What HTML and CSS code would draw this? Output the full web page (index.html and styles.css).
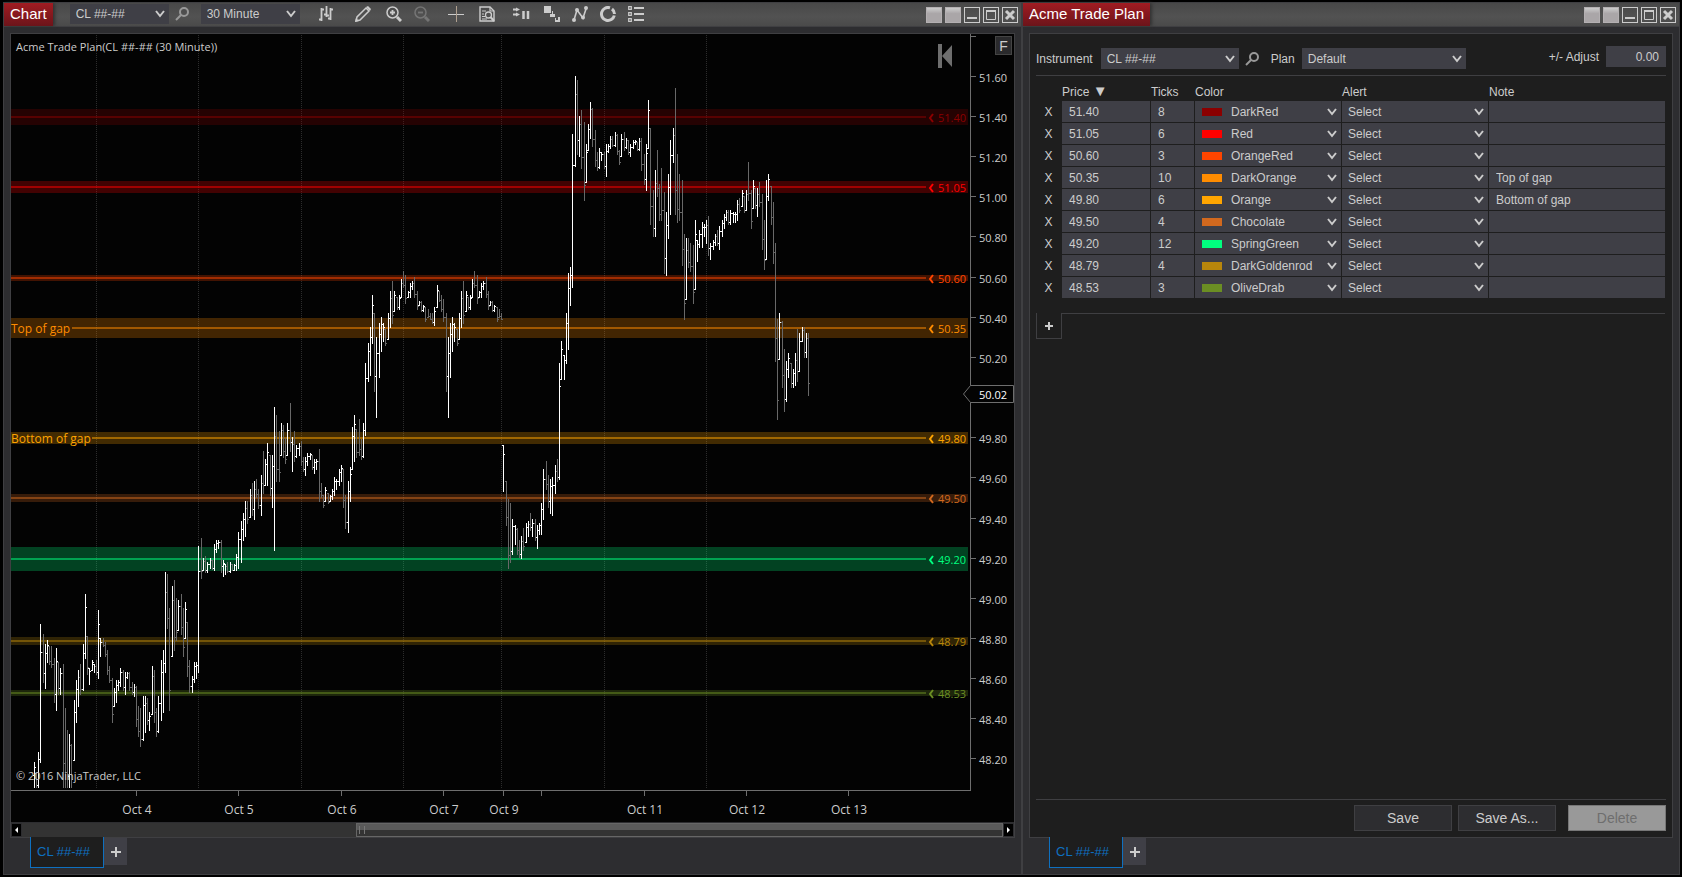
FILE: index.html
```html
<!DOCTYPE html>
<html lang="en">
<head>
    <meta charset="utf-8">
    <title>Acme Trade Plan</title>
    <link rel="stylesheet" href="styles.css">
</head>
<body>

    <!-- Chart window -->
    <section class="window chart-window">
        <header class="titlebar">
            <h1 class="title">Chart</h1>
            <select class="combo tool-combo" aria-label="Chart instrument"><option>CL ##-##</option></select>
            <button class="search" aria-label="Find instrument">
                <svg width="14" height="14" viewBox="0 0 14 14"><circle cx="9" cy="5" r="4"/><path d="M6 8L1 13"/></svg>
            </button>
            <select class="combo tool-combo" aria-label="Interval"><option>30 Minute</option></select>
            <div class="tools">
                <button class="tool first" aria-label="Chart style">
                    <svg width="16" height="16" viewBox="0 0 16 16"><path d="M3.500 2V15M1 13.500H3M4 3.500H6M8.500 0V11M6 8.500H8M9 9.500H11M12.500 2V14M10 12.500H12M13 3.500H15" stroke-width="1.800"/></svg>
                </button>
                <button class="tool wide" aria-label="Draw">
                    <svg width="16" height="16" viewBox="0 0 16 16"><path d="M1 15L2 11L11 2L14 5L5 14Z" stroke-width="1.500"/><path d="M11 1L13 0L16 3L15 5Z" class="solid"/><path d="M0 16L1 12L4 15Z" class="solid"/></svg>
                </button>
                <button class="tool near" aria-label="Zoom in">
                    <svg width="16" height="16" viewBox="0 0 16 16"><circle cx="6.500" cy="6.500" r="5.500" stroke-width="1.500"/><path d="M6.500 4V9M4 6.500H9" stroke-width="1.800"/><path d="M11 11L15 15" stroke-width="3"/></svg>
                </button>
                <button class="tool" aria-label="Zoom out" disabled>
                    <svg width="16" height="16" viewBox="0 0 16 16"><circle cx="6.500" cy="6.500" r="5.500" stroke-width="1.500"/><path d="M4 6.500H9" stroke-width="1.800"/><path d="M11 11L15 15" stroke-width="3"/></svg>
                </button>
                <button class="tool wide" aria-label="Crosshair">
                    <svg width="16" height="16" viewBox="0 0 16 16"><path d="M0 8.500H16" stroke-width="1"/><path d="M8.500 0V16" stroke="#b0a090" stroke-width="1"/></svg>
                </button>
                <button class="tool near" aria-label="Data box">
                    <svg width="16" height="16" viewBox="0 0 16 16"><path d="M1 1H11L15 5V15H1Z" stroke-width="1.400"/><path d="M11 1V5H15M3 5H7M3 8H5M3 10.500H6M3 13H8" stroke-width="1.200"/><circle cx="9.500" cy="9" r="3" stroke-width="1.300"/><path d="M11.500 11L15 15" stroke-width="2"/></svg>
                </button>
                <button class="tool wide" aria-label="Chart trader">
                    <svg width="18" height="16" viewBox="0 0 18 16"><path d="M1 3.500H5M1 8.500H5" stroke-width="2"/><path d="M4 1.500L8 3.500L4 5.500ZM4 6.500L8 8.500L4 10.500Z" class="solid"/><path d="M11.500 5V13M16 5V13" stroke-width="2.500"/></svg>
                </button>
                <button class="tool near" aria-label="Data series">
                    <svg width="16" height="16" viewBox="0 0 16 16"><path d="M0 0H7V7H0Z M6 11H11V5H9V8H6ZM11 12V16H16V11H14V14H12V12Z M8 5H11V8H8Z" class="solid"/></svg>
                </button>
                <button class="tool" aria-label="Indicators">
                    <svg width="16" height="16" viewBox="0 0 16 16"><path d="M2 14L5 4L11 12L14 3" stroke-width="1.600"/><circle cx="2" cy="14" r="2" class="solid"/><circle cx="5" cy="4" r="2" class="solid"/><circle cx="11" cy="11.500" r="2" class="solid"/><circle cx="14" cy="2" r="2" class="solid"/></svg>
                </button>
                <button class="tool" aria-label="Strategies">
                    <svg width="16" height="16" viewBox="0 0 16 16"><path d="M10 1.800A6.500 6.500 0 1 0 14.300 9.500M12 3A6.500 6.500 0 0 1 14.500 8" stroke-width="3"/></svg>
                </button>
                <button class="tool" aria-label="Properties">
                    <svg width="16" height="16" viewBox="0 0 16 16"><path d="M.7 .7H3.300V3.300H.7ZM.7 6.700H3.300V9.300H.7ZM.7 12.700H3.300V15.300H.7Z" stroke-width="1.200"/><path d="M6 2H16M6 8H16M6 14H16" stroke-width="2"/></svg>
                </button>
            </div>
            <div class="controls">
                <button class="control link" aria-label="Instrument link"></button>
                <button class="control link" aria-label="Interval link"></button>
                <button class="control" aria-label="Minimize"><svg width="14" height="14" viewBox="0 0 14 14"><path d="M2 10H12"/></svg></button>
                <button class="control" aria-label="Maximize"><svg width="14" height="14" viewBox="0 0 14 14"><path d="M2.500 3V11.500H11.500V3" class="thin"/><path d="M2 3H12"/></svg></button>
                <button class="control" aria-label="Close"><svg width="14" height="14" viewBox="0 0 14 14"><path d="M3 3L11 11M11 3L3 11" class="thick"/></svg></button>
            </div>
        </header>

        <div class="frame chart-frame">
            <svg class="chart" id="chart" viewBox="11 34 1003 788" preserveAspectRatio="xMinYMin meet"></svg>
            <button class="fixed-scale">F</button>
            <div class="scrollbar">
                <button class="arrow" aria-label="Scroll left"><svg width="9" height="12" viewBox="0 0 9 12"><path d="M6 3V9L3 6Z"/></svg></button>
                <div class="track"><div class="thumb"></div></div>
                <button class="arrow" aria-label="Scroll right"><svg width="9" height="12" viewBox="0 0 9 12"><path d="M3 3V9L6 6Z"/></svg></button>
            </div>
        </div>

        <nav class="tabs">
            <a class="tab" href="#chart">CL ##-##</a>
            <button class="add-tab" aria-label="Add tab"><svg width="10" height="10" viewBox="0 0 10 10"><path d="M5 0V10M0 5H10"/></svg></button>
        </nav>
    </section>

    <!-- Trade plan window -->
    <section class="window plan-window">
        <header class="titlebar">
            <h1 class="title">Acme Trade Plan</h1>
            <div class="controls">
                <button class="control link" aria-label="Instrument link"></button>
                <button class="control link" aria-label="Interval link"></button>
                <button class="control" aria-label="Minimize"><svg width="14" height="14" viewBox="0 0 14 14"><path d="M2 10H12"/></svg></button>
                <button class="control" aria-label="Maximize"><svg width="14" height="14" viewBox="0 0 14 14"><path d="M2.500 3V11.500H11.500V3" class="thin"/><path d="M2 3H12"/></svg></button>
                <button class="control" aria-label="Close"><svg width="14" height="14" viewBox="0 0 14 14"><path d="M3 3L11 11M11 3L3 11" class="thick"/></svg></button>
            </div>
        </header>

        <div class="frame plan" id="plan">
            <div class="plan-bar">
                <label for="instrument">Instrument</label>
                <select class="combo instrument" id="instrument"><option>CL ##-##</option></select>
                <button class="search" aria-label="Find instrument">
                    <svg width="14" height="14" viewBox="0 0 14 14"><circle cx="9" cy="5" r="4"/><path d="M6 8L1 13"/></svg>
                </button>
                <label for="planName">Plan</label>
                <select class="combo plan-name" id="planName"><option>Default</option></select>
                <div class="adjust">
                    <label for="adjust">+/- Adjust</label>
                    <input type="text" id="adjust" value="0.00">
                </div>
            </div>

            <table class="levels">
                <colgroup>
                    <col class="col-x"><col class="col-price"><col class="col-ticks">
                    <col class="col-combo"><col class="col-combo"><col>
                </colgroup>
                <thead>
                    <tr><th></th><th>Price <span class="sort">▼</span></th><th>Ticks</th><th>Color</th><th>Alert</th><th>Note</th></tr>
                </thead>
                <tbody id="levelRows"></tbody>
            </table>

            <div class="add-row">
                <button class="add-level" aria-label="Add level"><svg width="8" height="8" viewBox="0 0 8 8"><path d="M4 0V8M0 4H8"/></svg></button>
                <span class="rule"></span>
            </div>

            <footer class="actions">
                <button class="action">Save</button>
                <button class="action">Save As...</button>
                <button class="action delete" disabled>Delete</button>
            </footer>
        </div>

        <nav class="tabs">
            <a class="tab" href="#plan">CL ##-##</a>
            <button class="add-tab" aria-label="Add tab"><svg width="10" height="10" viewBox="0 0 10 10"><path d="M5 0V10M0 5H10"/></svg></button>
        </nav>
    </section>

    <script src="script.js"></script>
</body>
</html>
```

FILE: styles.css
```css
* { box-sizing: border-box; }
body {
    margin: 0;
    padding: 2px 2px 2px 3px;
    height: 100vh;
    display: flex;
    background: #000;
    color: #ccc;
    font: 12px/20px "Liberation Sans", Arial, sans-serif;
}
button, input, select {
    margin: 0;
    padding: 0;
    border: 0;
    border-radius: 0;
    background: none;
    color: inherit;
    font: inherit;
}
svg { display: block; }

/* windows */
.window {
    display: flex;
    flex-direction: column;
    border: 1px solid #3f3f42;
    background: #2d2d30;
    height: calc(100vh - 4px);
}
.chart-window { flex: 1; min-width: 0; }
.plan-window { flex: none; width: 658px; }
.titlebar {
    display: flex;
    align-items: flex-start;
    flex: none;
    height: 24px;
    padding-right: 3px;
    background: linear-gradient(#484848, #525252 60%, #4a4a4a);
    border-bottom: 1px solid #3f3f42;
}
.title {
    margin: 0;
    height: 23px;
    padding: 0 6px;
    background: linear-gradient(#a01c22, #6c141a);
    box-shadow: 2px 0 3px #333;
    color: #fff;
    font-size: 15px;
    font-weight: normal;
    line-height: 22px;
    white-space: nowrap;
}
.frame {
    display: flex;
    flex-direction: column;
    flex: 1;
    min-height: 0;
    margin: 6px 6px 0;
    border: 1px solid #3f3f42;
}

/* combos */
.combo {
    appearance: none;
    height: 21px;
    padding: 0 6px;
    background: #3f3f46 url("data:image/svg+xml,%3Csvg xmlns='http://www.w3.org/2000/svg' width='10' height='8'%3E%3Cpath d='M1 1L5 6L9 1' fill='none' stroke='%23ccc' stroke-width='2'/%3E%3C/svg%3E") no-repeat right 4px center;
}
.tool-combo { width: 99px; height: 20px; background-position-x: right 6px; }
.titlebar .combo, .titlebar .search, .tools { margin-top: 1px; }
.titlebar .title + .combo { margin-left: 17px; }
.search { width: 32px; padding-left: 6px; height: 20px; }
.search svg { fill: none; stroke: #999; stroke-width: 2; }

/* chart toolbar */
.tools { display: flex; margin-left: 9px; }
.tool { display: flex; align-items: center; justify-content: center; width: 28px; height: 20px; }
.tool svg { fill: none; stroke: #ccc; }
.tool .solid { fill: #ccc; stroke: none; }
.tool:disabled { opacity: .3; }
.first { width: 34px; }
.near { margin-left: 3px; }
.wide { margin-left: 6px; }

.controls { display: flex; gap: 3px; margin: 4px 0 0 auto; }
.control { width: 16px; height: 16px; border: 1px solid #ccc; }
.control svg { fill: none; stroke: #ccc; stroke-width: 2; }
.control .thin { stroke-width: 1; }
.control .thick { stroke-width: 3; }
.link { background: linear-gradient(#ccc, #aaa6a8 40%, #aaa6a8); border-color: #b4b0b2; }

/* chart */
.chart-frame { position: relative; background: #030303; }
.chart { flex: 1; min-height: 0; width: 100%; shape-rendering: crispEdges; }
.chart text { font: 11px "Open Sans", "Noto Sans", sans-serif; fill: #ccc; }
.chart .grid { stroke: #2c2c2c; stroke-dasharray: 1 1; }
.chart .axis { stroke: #6e6e6e; fill: none; }
.chart .up { stroke: #fff; fill: none; }
.chart .down { stroke: #686868; fill: none; }
.chart .chevron { fill: none; stroke-width: 2; shape-rendering: auto; }
.chart .marker { fill: #030303; stroke: #6e6e6e; shape-rendering: auto; }
.chart .marker-text { fill: #fff; }
.chart .rewind { fill: #6e6e6e; shape-rendering: auto; }
.chart .note { font-size: 12px; }
.chart .date { font-size: 12px; text-anchor: middle; }
.fixed-scale {
    position: absolute;
    top: 2px;
    right: 2px;
    width: 17px;
    height: 19px;
    border: 1px solid #444;
    background: #2a2a2c;
    font-size: 14px;
    line-height: 16px;
}

.scrollbar {
    display: flex;
    align-items: center;
    flex: none;
    height: 15px;
    padding: 0 1px;
    gap: 1px;
    background: #2d2d30;
}
.arrow { width: 9px; height: 12px; background: #000; }
.arrow svg { fill: #fff; }
.track { flex: 1; height: 14px; background: #333; }
.thumb {
    width: 66%;
    height: 14px;
    margin-left: auto;
    border: 1px solid #666;
    background: linear-gradient(#5a5a5a 50%, #333 50%);
}
.thumb::before {
    content: "";
    display: block;
    width: 4px;
    height: 8px;
    margin: 2px;
    border: solid #777;
    border-width: 0 1px;
}

/* tabs under each window */
.tabs { display: flex; align-items: flex-start; flex: none; height: 36px; padding-left: 26px; }
.tab {
    width: 74px;
    height: 31px;
    margin-top: -1px;
    padding-left: 6px;
    border: 1px solid #0e70c0;
    border-top: 0;
    background: #1e1e1e;
    color: #0e70c0;
    font-size: 13px;
    line-height: 29px;
    text-decoration: none;
    position: relative;
}
.add-tab { display: flex; align-items: center; justify-content: center; width: 23px; height: 27px; background: #3f3f46; }
.add-tab svg, .add-level svg { stroke: #ccc; stroke-width: 2; }

/* trade plan */
.plan { padding: 0 6px 6px; background: #1e1e1e; }
.plan-bar {
    display: flex;
    align-items: flex-end;
    flex: none;
    height: 42px;
    padding: 12px 0 6px;
    border-bottom: 1px solid #3f3f42;
}
.instrument { width: 138px; margin-left: 8px; background-position-x: right 6px; }
.plan-name { width: 164px; margin-left: 7px; }
.adjust { display: flex; align-items: center; align-self: flex-start; gap: 7px; margin-left: auto; }
.adjust input { width: 60px; height: 21px; padding-right: 7px; background: #3f3f46; text-align: right; }

.levels { width: 100%; table-layout: fixed; border-spacing: 0; }
.levels th { height: 25px; padding: 0; font-weight: normal; text-align: left; line-height: 18px; vertical-align: bottom; }
.levels td { height: 22px; padding: 0 1px 1px 0; }
.levels input, .levels select { display: block; width: 100%; height: 21px; background-color: #3f3f46; }
.levels input { padding: 0 7px; }
.sort { font-size: 15px; line-height: 16px; }
.col-x { width: 26px; }
.col-price { width: 89px; }
.col-ticks { width: 44px; }
.col-combo { width: 147px; }
.remove { display: block; width: 25px; height: 21px; }
.color-cell { display: flex; align-items: center; background: #3f3f46; padding-left: 7px; }
.swatch { flex: none; width: 20px; height: 8px; }
.color-cell .combo { padding: 0 0 0 9px; }

.add-row { display: flex; flex: none; margin-top: 14px; }
.add-level {
    display: flex;
    align-items: center;
    justify-content: center;
    width: 26px;
    height: 26px;
    border: 1px solid #3f3f42;
    border-top: 0;
}
.rule { flex: 1; border-top: 1px solid #3f3f42; margin-right: 1px; }

.actions {
    display: flex;
    justify-content: flex-end;
    gap: 6px;
    margin-top: auto;
    padding-top: 5px;
    border-top: 1px solid #3f3f42;
}
.action { width: 98px; height: 26px; border: 1px solid #3f3f42; background: #2d2d30; font-size: 14px; }
.delete { margin-left: 6px; border-color: #777; background: #999; color: #6e6e6e; }
```

FILE: script.js
```js
// price levels of the plan, shown in the table and on the chart
const levels = [
    { price: '51.40', ticks: 8, color: 'DarkRed', note: '' },
    { price: '51.05', ticks: 6, color: 'Red', note: '' },
    { price: '50.60', ticks: 3, color: 'OrangeRed', note: '' },
    { price: '50.35', ticks: 10, color: 'DarkOrange', note: 'Top of gap', start: 72 },
    { price: '49.80', ticks: 6, color: 'Orange', note: 'Bottom of gap', start: 92 },
    { price: '49.50', ticks: 4, color: 'Chocolate', note: '' },
    { price: '49.20', ticks: 12, color: 'SpringGreen', note: '' },
    { price: '48.79', ticks: 4, color: 'DarkGoldenrod', note: '' },
    { price: '48.53', ticks: 3, color: 'OliveDrab', note: '' }
];

document.getElementById('levelRows').innerHTML = levels.map(l => `
    <tr>
        <td><button class="remove" aria-label="Remove ${l.price}">X</button></td>
        <td><input type="text" aria-label="Price" value="${l.price}"></td>
        <td><input type="text" aria-label="Ticks" value="${l.ticks}"></td>
        <td><div class="color-cell"><span class="swatch" style="background: ${l.color}"></span><select class="combo" aria-label="Color"><option>${l.color}</option></select></div></td>
        <td><select class="combo" aria-label="Alert"><option>Select</option></select></td>
        <td><input type="text" aria-label="Note" value="${l.note}"></td>
    </tr>`).join('');

// bars: x, high, low, 1 = up / 0 = down
const bars = [
    [34,762,788,1],[36,773,788,0],[38,752,788,1],[40,624,763,1],[43,634,683,0],[45,644,689,1],[47,640,663,1],[49,646,665,0],
    [51,646,668,0],[54,658,703,0],[56,648,711,1],[58,662,695,0],[60,668,695,1],[63,664,788,0],[65,708,788,0],[67,730,788,0],
    [69,734,788,1],[71,744,788,0],[74,700,761,1],[76,680,723,1],[78,670,707,1],[80,664,695,0],[83,644,691,1],[85,594,659,1],
    [87,636,675,0],[89,668,685,1],[92,660,671,1],[94,664,673,1],[96,660,675,0],[98,610,679,1],[100,638,657,1],[103,638,647,0],
    [105,642,657,0],[107,650,675,0],[109,666,683,0],[112,678,723,0],[114,688,707,1],[116,680,703,1],[118,680,691,1],[120,668,687,1],
    [123,670,691,0],[125,672,695,1],[127,672,679,1],[129,672,691,0],[132,682,695,0],[134,684,697,1],[136,686,727,0],[138,706,737,0],
    [140,708,747,0],[143,696,741,1],[145,696,733,1],[147,698,725,0],[149,712,731,1],[152,666,715,1],[154,670,723,0],[156,708,737,0],
    [158,696,733,1],[161,660,721,1],[163,650,713,1],[165,572,673,1],[167,574,629,0],[169,608,711,0],[172,586,657,1],[174,580,651,0],
    [176,598,641,0],[178,600,631,1],[181,594,635,0],[183,608,657,0],[185,602,639,1],[187,622,677,0],[189,660,693,0],[192,676,693,1],
    [194,662,683,1],[196,662,679,1],[198,546,673,1],[201,538,579,0],[203,558,571,1],[205,556,573,0],[207,562,573,1],[210,558,569,1],
    [212,560,570,0],[214,544,571,1],[216,540,553,1],[218,540,549,1],[221,540,573,0],[223,560,577,1],[225,564,575,1],[227,562,573,0],
    [230,562,573,1],[232,564,571,0],[234,564,571,1],[236,554,571,1],[238,532,569,1],[241,521,563,1],[243,513,541,1],[245,501,537,1],
    [247,501,524,0],[250,489,518,1],[252,483,516,0],[254,481,520,1],[256,479,498,0],[258,489,509,0],[261,475,516,1],[263,451,494,0],
    [265,459,486,1],[267,443,486,1],[270,455,496,0],[272,455,508,1],[274,407,551,1],[276,415,482,0],[279,431,482,0],[281,423,456,1],
    [283,425,458,0],[285,438,464,0],[287,423,456,1],[290,403,452,0],[292,437,472,1],[294,431,462,0],[296,445,458,1],[299,443,456,1],
    [301,441,466,0],[303,457,472,0],[305,457,476,1],[307,453,466,1],[310,453,460,1],[312,455,470,0],[314,459,474,1],[316,459,470,1],
    [319,449,502,0],[321,483,498,0],[323,495,508,0],[325,487,502,1],[328,493,504,0],[330,495,502,1],[332,489,500,1],[334,477,496,1],
    [336,479,490,1],[339,469,486,1],[341,465,482,1],[343,469,508,0],[345,495,529,0],[348,481,533,1],[350,467,502,1],[352,427,470,1],
    [354,415,462,1],[356,429,458,0],[359,419,456,0],[361,439,460,0],[363,423,458,1],[365,363,436,1],[368,343,382,1],[370,327,376,1],
    [372,295,344,1],[374,313,392,0],[376,337,418,1],[379,323,378,1],[381,317,352,1],[383,323,342,1],[385,329,346,0],[388,313,340,1],
    [390,291,328,1],[392,281,324,0],[394,291,312,1],[397,297,310,0],[399,295,310,1],[401,279,298,1],[403,271,288,0],[405,275,304,0],
    [408,291,298,1],[410,283,298,1],[412,281,290,1],[414,277,298,0],[417,291,310,0],[419,301,306,1],[421,301,312,0],[423,305,312,1],
    [425,307,322,0],[428,309,318,0],[430,313,320,0],[432,313,324,0],[434,307,326,1],[437,285,308,1],[439,291,302,0],[441,295,312,0],
    [443,299,322,0],[446,313,392,0],[448,337,418,1],[450,323,378,1],[452,317,352,1],[454,323,342,1],[457,329,346,0],[459,313,340,1],
    [461,291,328,1],[463,281,324,0],[466,291,312,1],[468,297,310,0],[470,295,310,1],[472,279,298,1],[474,271,288,0],[477,275,304,0],
    [479,291,298,1],[481,283,298,1],[483,281,290,1],[486,277,298,0],[488,291,310,0],[490,301,306,1],[492,301,312,0],[494,305,312,1],
    [497,307,322,0],[499,309,318,0],[501,313,320,0],[503,445,492,1],[506,481,526,0],[508,499,569,0],[510,503,563,0],[512,519,555,1],
    [515,525,545,1],[517,528,555,0],[519,540,558,0],[521,536,559,1],[523,528,551,0],[526,523,543,1],[528,521,537,1],[530,513,531,0],
    [532,519,537,1],[535,519,541,0],[537,525,549,1],[539,523,535,1],[541,503,535,1],[543,469,520,1],[546,461,490,0],[548,475,508,0],
    [550,479,514,1],[552,477,516,1],[555,465,494,1],[557,459,482,0],[559,363,480,1],[561,341,380,1],[564,355,380,1],[566,313,364,1],
    [568,273,350,1],[570,267,306,1],[572,134,288,1],[575,76,167,1],[577,80,155,0],[579,116,157,1],[581,110,169,0],[584,122,201,0],
    [586,144,183,1],[588,124,151,1],[590,102,139,1],[592,108,147,0],[595,130,167,0],[597,152,171,0],[599,148,169,1],[601,152,161,1],
    [604,152,169,0],[606,144,177,1],[608,144,153,1],[610,136,149,1],[612,136,147,0],[615,132,147,1],[617,134,155,0],[619,150,165,0],
    [621,134,157,1],[624,132,151,0],[626,138,149,1],[628,140,155,0],[630,144,157,1],[633,140,149,1],[635,140,145,1],[637,142,151,0],
    [639,138,151,1],[641,138,171,0],[644,154,185,0],[646,144,191,1],[648,100,149,1],[650,128,225,0],[653,190,237,0],[655,170,237,1],
    [657,150,197,0],[659,184,221,0],[661,168,221,0],[664,192,274,0],[666,212,276,1],[668,174,239,1],[670,140,215,1],[673,128,163,1],
    [675,88,215,0],[677,154,223,0],[679,174,221,0],[682,180,266,0],[684,234,320,0],[686,238,300,1],[688,238,268,0],[690,243,272,0],
    [693,245,304,0],[695,220,290,1],[697,240,262,1],[699,230,248,1],[702,222,248,1],[704,224,237,1],[706,220,244,1],[708,216,256,0],
    [710,243,260,1],[713,240,250,1],[715,234,246,1],[717,230,246,0],[719,226,250,1],[722,220,237,1],[724,214,229,1],[726,210,221,1],
    [728,210,225,0],[730,210,225,1],[733,212,223,1],[735,212,223,1],[737,200,221,1],[739,198,213,0],[742,190,207,1],[744,196,213,0],
    [746,190,211,1],[748,162,201,0],[751,190,229,0],[753,180,209,1],[755,188,209,0],[757,188,217,1],[759,182,207,0],[762,194,250,0],
    [764,220,270,0],[766,180,260,1],[768,174,201,1],[771,186,225,0],[773,202,264,0],[775,243,362,0],[777,319,420,0],[779,313,360,1],
    [782,321,388,0],[784,349,412,0],[786,361,402,1],[788,353,378,1],[791,363,388,0],[793,369,388,1],[795,353,386,1],[797,329,382,0],
    [799,333,372,1],[802,327,342,1],[804,327,358,0],[806,333,358,1],[808,333,396,0]
];

const dates = [
    [136, 'Oct 4'], [238, 'Oct 5'], [341, 'Oct 6'], [443, 'Oct 7'], [503, 'Oct 9'],
    [541, ''], [644, 'Oct 11'], [746, 'Oct 12'], [848, 'Oct 13']
];

const priceY = price => Math.round(117 + (51.4 - price) * 200.75);

let svg = '';

// session breaks
[96, 198, 301, 403, 501, 604, 706].forEach(x => {
    svg += `<path class="grid" d="M${x + 0.5} 35V788"/>`;
});

// level bands
levels.forEach(l => {
    const y = priceY(l.price);
    svg += `<rect x="11" y="${y - l.ticks}" width="957" height="${l.ticks * 2}" fill="${l.color}" fill-opacity=".25"/>`;
    svg += `<path d="M${l.start || 11} ${y}H926" stroke="${l.color}" stroke-width="2" stroke-opacity=".5"/>`;
});

// price bars, each one opens where the last one closed
let last = 775;
bars.forEach(([x, high, low, up]) => {
    const part = Math.round((low - high) / 5);
    const close = up ? high + part : low - part;
    const open = Math.min(Math.max(last, high), low - 1);
    svg += `<path class="${up ? 'up' : 'down'}" d="M${x + 0.5} ${high}V${low}M${x - 1} ${open + 0.5}H${x}M${x + 1} ${close + 0.5}H${x + 2}"/>`;
    last = close;
});

// level labels
levels.forEach(l => {
    const y = priceY(l.price);
    svg += `<path class="chevron" d="M933 ${y - 3}L930 ${y + 1}L933 ${y + 5}" stroke="${l.color}"/>`;
    svg += `<text x="938" y="${y + 5}" style="fill: ${l.color}">${l.price}</text>`;
    if (l.note) svg += `<text class="note" x="11" y="${y + 5}" style="fill: ${l.color}">${l.note}</text>`;
});

// axes
svg += '<path class="axis" d="M970.5 34V790.5H11"/>';
for (let i = 0; i <= 18; i++) {
    const price = 51.8 - i * 0.2;
    const y = priceY(price);
    if (i === 9) continue; // under the last price marker
    svg += `<path class="axis" d="M970 ${y - 0.5}H976"/>`;
    if (i > 0) svg += `<text x="979" y="${y + 5}">${price.toFixed(2)}</text>`;
}
dates.forEach(([x, label]) => {
    svg += `<path class="axis" d="M${x + 0.5} 790V796"/>`;
    if (label) svg += `<text class="date" x="${x + 1}" y="814">${label}</text>`;
});

// last price
svg += '<path class="marker" d="M963.5 394L970.5 385.5H1013.5V402.500H970.5Z"/>';
svg += '<text class="marker-text" x="979" y="399">50.02</text>';

svg += '<path class="rewind" d="M938 44H942V68H938ZM952 45V67L942 56Z"/>';
svg += '<text x="16" y="51">Acme Trade Plan(CL ##-## (30 Minute))</text>';
svg += '<text x="16" y="780">© 2016 NinjaTrader, LLC</text>';

document.getElementById('chart').innerHTML = svg;
```
